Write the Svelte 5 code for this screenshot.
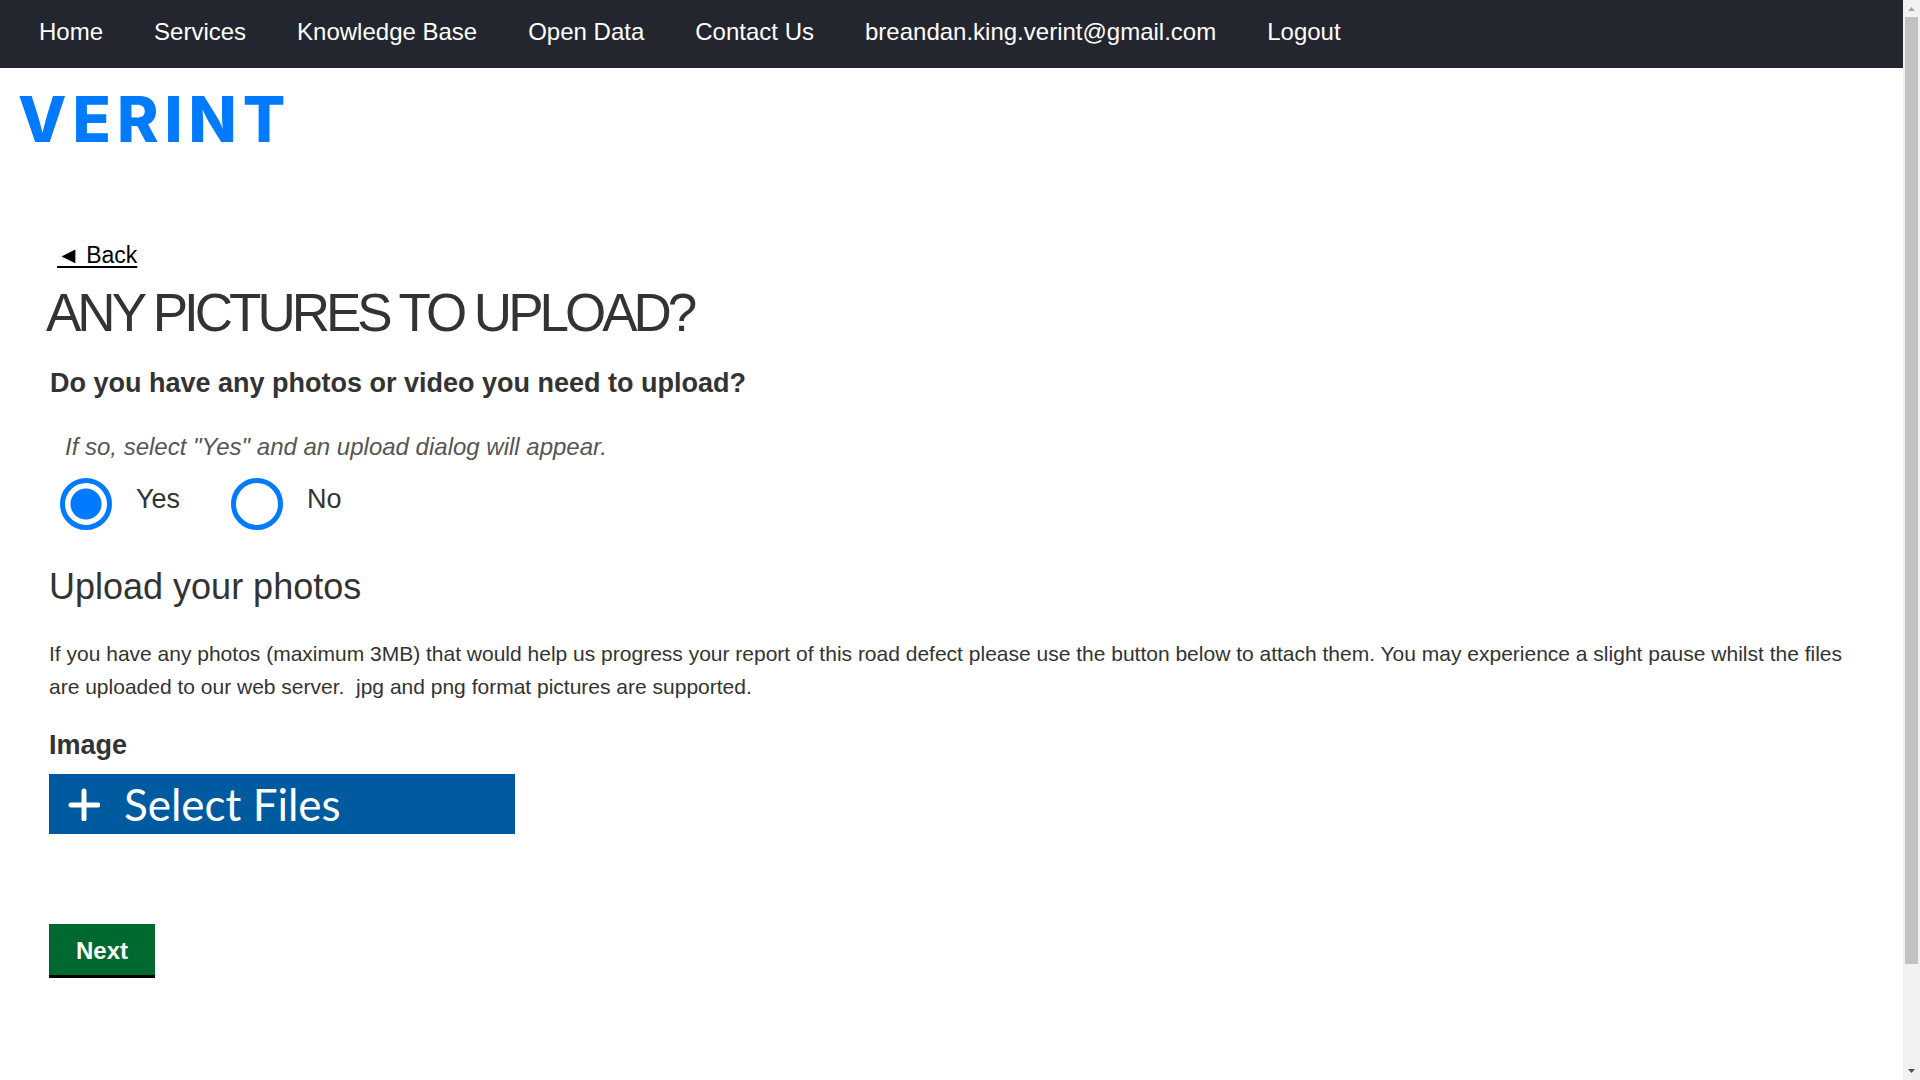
<script>
  const links = [
    'Home',
    'Services',
    'Knowledge Base',
    'Open Data',
    'Contact Us',
    'breandan.king.verint@gmail.com',
    'Logout',
  ];
  let hasPhotos = $state('yes');
</script>

<div class="window">
  <div class="page">
    <nav aria-label="Main">
      {#each links as link}
        <a href="#top">{link}</a>
      {/each}
    </nav>

    <header>
      <a class="logo" href="#top">VERINT</a>
    </header>

    <main>
      <a class="back" href="#back">◄ Back</a>
      <h1>ANY PICTURES TO UPLOAD?</h1>

      <fieldset>
        <legend>Do you have any photos or video you need to upload?</legend>
        <p class="hint">If so, select "Yes" and an upload dialog will appear.</p>
        <div class="options">
          <label>
            <input type="radio" name="photos" value="yes" bind:group={hasPhotos} />
            <span>Yes</span>
          </label>
          <label>
            <input type="radio" name="photos" value="no" bind:group={hasPhotos} />
            <span>No</span>
          </label>
        </div>
      </fieldset>

      <h2>Upload your photos</h2>
      <p class="info">
        If you have any photos (maximum 3MB) that would help us progress your report of this road
        defect please use the button below to attach them. You may experience a slight pause whilst
        the files are uploaded to our web server.&nbsp; jpg and png format pictures are supported.
      </p>

      <h3>Image</h3>
      <button class="select" type="button">
        <svg viewBox="0 0 32 34" width="32" height="34" aria-hidden="true">
          <path d="M16 4v28M3 18h27" fill="none" stroke="currentColor" stroke-width="5" stroke-linecap="round" />
        </svg>
        Select Files
      </button>

      <button class="next" type="button">Next</button>
    </main>
  </div>

  <div class="scrollbar" aria-hidden="true">
    <svg viewBox="0 0 17 17"><path d="M5 11h7L8.500 7z" fill="#a3a3a3" /></svg>
    <div class="track"><div class="thumb"></div></div>
    <svg viewBox="0 0 17 17"><path d="M5 6h7L8.500 10z" fill="#505050" /></svg>
  </div>
</div>

<style>
  :global(body) {
    margin: 0;
    background: #fff;
  }
  .window {
    display: grid;
    grid-template-columns: minmax(0, 1fr) 17px;
    min-height: 100vh;
    font-family: 'Liberation Sans', Arial, sans-serif;
    color: #333;
  }
  nav {
    display: flex;
    flex-wrap: wrap;
    gap: 0 51px;
    padding: 16px 39px 20px;
    background: #23262e;
  }
  nav a {
    color: #fff;
    font-size: 24px;
    line-height: 32px;
    text-decoration: none;
  }
  header {
    display: flex;
    padding: 15px 18px 0;
  }
  .logo {
    color: #007bff;
    font-family: Inter, sans-serif;
    font-size: 63px;
    font-weight: 800;
    line-height: 72px;
    letter-spacing: 6px;
    text-decoration: none;
  }
  main {
    display: flex;
    flex-direction: column;
    align-items: flex-start;
    padding: 84px 49px 40px;
  }
  .back {
    margin-left: 8px;
    color: #000;
    font-size: 23px;
    line-height: 32px;
    text-underline-offset: 3px;
    text-decoration-thickness: 2px;
  }
  h1 {
    margin: 10px 0 0 -3px;
    font-size: 53px;
    font-weight: 400;
    line-height: 64px;
    letter-spacing: -4px;
  }
  fieldset {
    min-width: 0;
    margin: 20px 0 0;
    padding: 0;
    border: 0;
  }
  legend {
    padding: 0 1px;
    font-size: 27px;
    font-weight: 700;
    line-height: 36px;
  }
  .hint {
    margin: 30px 0 0 16px;
    color: #555;
    font-size: 24px;
    font-style: italic;
    line-height: 32px;
  }
  .options {
    display: flex;
    gap: 51px;
    margin: 15px 0 0 11px;
  }
  label {
    display: flex;
    gap: 24px;
    font-size: 27px;
    line-height: 42px;
  }
  input {
    appearance: none;
    box-sizing: border-box;
    width: 52px;
    height: 52px;
    margin: 0;
    border: 5px solid #007bff;
    border-radius: 50%;
  }
  input:checked {
    background: radial-gradient(circle, #007bff 15px, #fff 16px);
  }
  h2 {
    margin: 35px 0 0;
    font-size: 36px;
    font-weight: 400;
    line-height: 44px;
  }
  .info {
    margin: 28px 0 0;
    font-size: 21px;
    line-height: 33px;
  }
  h3 {
    margin: 24px 0 0;
    font-size: 27px;
    font-weight: 700;
    line-height: 36px;
  }
  .select {
    display: flex;
    align-items: center;
    gap: 24px;
    width: 466px;
    height: 60px;
    margin: 11px 0 0;
    padding: 0 19px;
    border: 0;
    background: #005a9f;
    color: #fff;
    font-family: Lato, sans-serif;
    font-size: 44px;
  }
  .next {
    margin: 90px 0 0;
    padding: 11px 27px 8px;
    border: 0;
    border-bottom: 3px solid #000;
    background: #00692f;
    color: #fff;
    font-family: inherit;
    font-size: 24px;
    font-weight: 700;
    line-height: 32px;
  }
  .scrollbar {
    display: flex;
    flex-direction: column;
    background: #f1f1f1;
  }
  .scrollbar svg {
    display: block;
    width: 17px;
    height: 17px;
  }
  .track {
    flex: 1;
    padding: 0 2px;
  }
  .thumb {
    height: 90.5%;
    background: #c1c1c1;
  }
</style>
